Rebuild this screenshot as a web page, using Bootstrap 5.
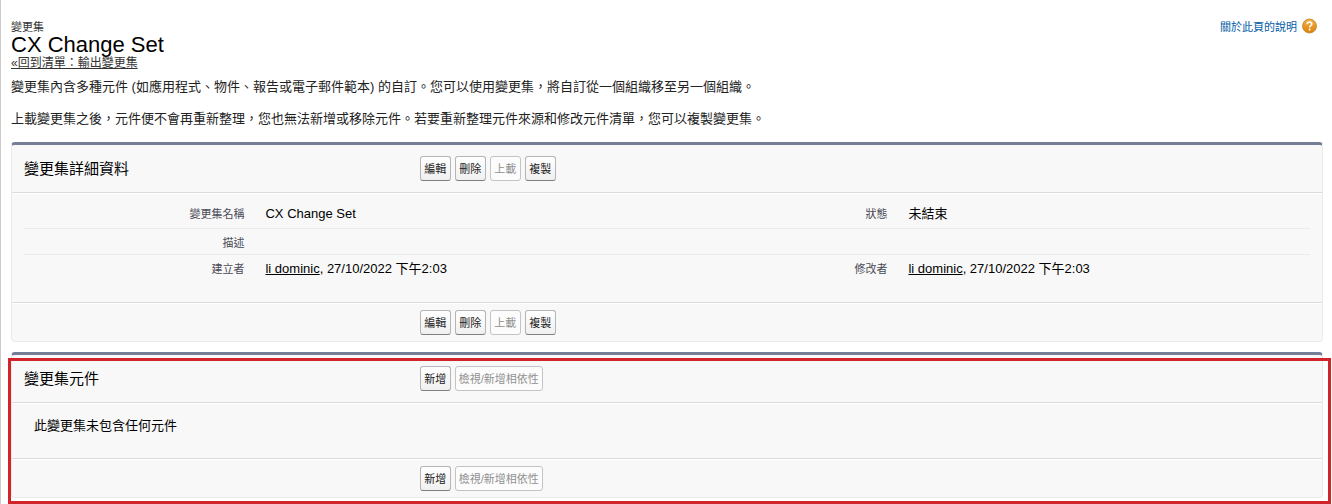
<!DOCTYPE html>
<html lang="zh-Hant">
<head>
<meta charset="utf-8">
<meta name="viewport" content="width=device-width, initial-scale=1">
<title>變更集: CX Change Set</title>
<link href="https://cdn.jsdelivr.net/npm/bootstrap@5.3.0/dist/css/bootstrap.min.css" rel="stylesheet">
<style>
  body { font: 13px/16px "Liberation Sans", "Noto Sans CJK TC", sans-serif; color: #222; background: #fff; overflow-x: hidden; }
  .page-main { border-left: 1px solid #ccc; padding: 19px 9px 6px 10px; }
  .page-kind { font-size: 11px; line-height: 16px; color: #333; }
  .page-name { font-size: 22px; line-height: 20px; font-weight: 400; color: #000; }
  .back-link { font-size: 12px; line-height: 16px; color: #333; }
  .help-link { font-size: 11px; color: #015ba7; gap: 5px; margin-right: 6px; }
  .help-link svg { margin-top: -2px; }
  .intro { margin: 8px 0 15px; }
  .intro p { margin-bottom: 16px; }
  .intro p:last-child { margin-bottom: 0; }
  .panel { background: #f8f8f8; border: 1px solid #eaeaea; border-top: 3px solid #747e96; border-radius: 4px; margin-bottom: 10px; }
  .panel-head, .panel-foot { padding: 0 12px; gap: 10px; }
  .panel-head { height: 47px; }
  .panel-foot { height: 39px; border-top: 1px solid #dbdbdb; box-shadow: inset 0 1px #fff; }
  .panel-title { flex: 0 0 30%; font-size: 15px; line-height: 20px; font-weight: 400; color: #000; margin: 0; }
  .panel-content { border-top: 1px solid #dbdbdb; box-shadow: inset 0 1px #fff; padding: 0 12px; }
  .actions { gap: 4px; }
  .btn-tool { font-size: 11px; line-height: 15px; padding: 5px 3px 3px; min-width: 31px; color: #222; border: 1px solid #b5b5b5; border-bottom-color: #7f7f7f; border-radius: 3px; background: linear-gradient(#fff, #f0f0f0); }
  .btn-tool:hover { color: #222; border-color: #7f7f7f; background: #eee; }
  .btn-tool:disabled { color: #909090; border-color: #c4c4c4; background: #fcfcfc; opacity: 1; }
  .fields { table-layout: fixed; }
  .fields th, .fields td { vertical-align: top; padding-top: 6px; }
  .fields tr { height: 26px; border-bottom: 1px solid #ececec; }
  .fields tr:first-child { height: 35px; }
  .fields tr:first-child > * { padding-top: 13px; }
  .fields tr:last-child { height: 48px; border-bottom: 0; }
  .fields th { width: 18%; padding-right: 11px; text-align: right; font-size: 11px; font-weight: 400; color: #4a4a56; }
  .fields td { width: 32%; padding-left: 10px; color: #000; }
  .fields a { color: #000; }
  .empty-note { margin: 0; padding: 15px 10px 24px; color: #000; }
  .highlight { position: absolute; inset: 6px -8px -6px -3px; border: 3px solid #d2232a; pointer-events: none; }
</style>
</head>
<body>
<main class="page-main">
  <header class="d-flex justify-content-between align-items-start">
    <div>
      <div class="page-kind">變更集</div>
      <h1 class="page-name m-0">CX Change Set</h1>
      <a class="back-link d-block" href="#">«回到清單：輸出變更集</a>
    </div>
    <a class="help-link d-flex align-items-center text-decoration-none" href="#">關於此頁的說明
      <svg width="15" height="16" viewBox="0 0 15 16" aria-hidden="true">
        <defs><linearGradient id="orb" x1="0" y1="0" x2="0" y2="1"><stop offset="0" stop-color="#f5b043"/><stop offset="1" stop-color="#dc8208"/></linearGradient></defs>
        <circle cx="7.5" cy="8" r="7" fill="url(#orb)" stroke="#b8842f" stroke-width=".8"/>
        <path d="M5.2 6.2C5.2 3.4 9.8 3.5 9.8 6.1 9.8 7.7 7.6 7.8 7.6 9.5" fill="none" stroke="#fff" stroke-width="1.6"/>
        <circle cx="7.6" cy="11.6" r="1" fill="#fff"/>
      </svg>
    </a>
  </header>

  <div class="intro">
    <p>變更集內含多種元件 (如應用程式、物件、報告或電子郵件範本) 的自訂。您可以使用變更集，將自訂從一個組織移至另一個組織。</p>
    <p>上載變更集之後，元件便不會再重新整理，您也無法新增或移除元件。若要重新整理元件來源和修改元件清單，您可以複製變更集。</p>
  </div>

  <section class="panel">
    <div class="panel-head d-flex align-items-center">
      <h2 class="panel-title">變更集詳細資料</h2>
      <div class="actions d-flex">
        <button type="button" class="btn btn-tool">編輯</button>
        <button type="button" class="btn btn-tool">刪除</button>
        <button type="button" class="btn btn-tool" disabled>上載</button>
        <button type="button" class="btn btn-tool">複製</button>
      </div>
    </div>
    <div class="panel-content">
      <table class="fields w-100">
        <tbody>
          <tr><th scope="row">變更集名稱</th><td>CX Change Set</td><th scope="row">狀態</th><td>未結束</td></tr>
          <tr><th scope="row">描述</th><td colspan="3"></td></tr>
          <tr><th scope="row">建立者</th><td><a href="#">li dominic</a>, 27/10/2022 下午2:03</td><th scope="row">修改者</th><td><a href="#">li dominic</a>, 27/10/2022 下午2:03</td></tr>
        </tbody>
      </table>
    </div>
    <div class="panel-foot d-flex align-items-center">
      <div class="panel-title"></div>
      <div class="actions d-flex">
        <button type="button" class="btn btn-tool">編輯</button>
        <button type="button" class="btn btn-tool">刪除</button>
        <button type="button" class="btn btn-tool" disabled>上載</button>
        <button type="button" class="btn btn-tool">複製</button>
      </div>
    </div>
  </section>

  <div class="position-relative">
    <section class="panel mb-0">
      <div class="panel-head d-flex align-items-center">
        <h2 class="panel-title">變更集元件</h2>
        <div class="actions d-flex">
          <button type="button" class="btn btn-tool">新增</button>
          <button type="button" class="btn btn-tool" disabled>檢視/新增相依性</button>
        </div>
      </div>
      <div class="panel-content">
        <p class="empty-note">此變更集未包含任何元件</p>
      </div>
      <div class="panel-foot d-flex align-items-center">
        <div class="panel-title"></div>
        <div class="actions d-flex">
          <button type="button" class="btn btn-tool">新增</button>
          <button type="button" class="btn btn-tool" disabled>檢視/新增相依性</button>
        </div>
      </div>
    </section>
    <div class="highlight"></div>
  </div>
</main>
<script src="https://cdn.jsdelivr.net/npm/bootstrap@5.3.0/dist/js/bootstrap.bundle.min.js"></script>
</body>
</html>
